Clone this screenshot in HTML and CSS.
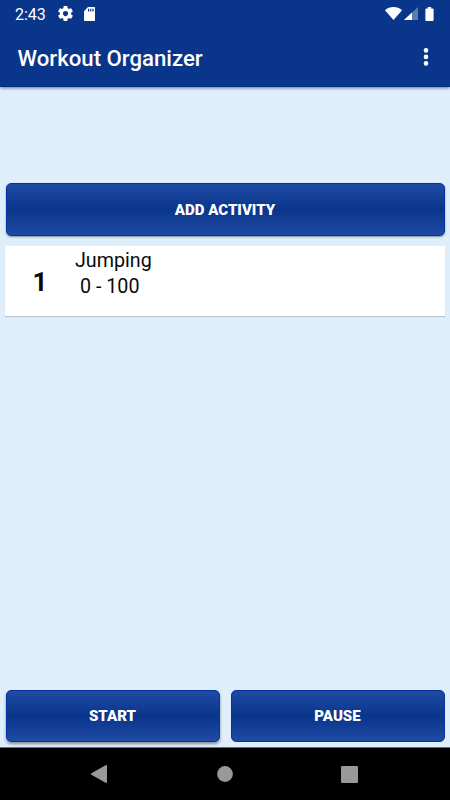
FILE: index.html
```html
<!DOCTYPE html>
<html lang="en">
<head>
  <meta charset="UTF-8">
  <title>Workout Organizer</title>
  <meta name="viewport" content="width=device-width, initial-scale=1">
  <link rel="stylesheet" href="styles.css">
</head>
<body>
<header>
  <div class="status">
    <span class="time">2:43</span>
    <svg class="gear" width="15" height="15" viewBox="2 2 20 20"><path d="M19.43 12.98c.04-.32.07-.64.07-.98s-.03-.66-.07-.98l2.11-1.65c.19-.15.24-.42.12-.64l-2-3.46c-.12-.22-.39-.3-.61-.22l-2.49 1c-.52-.4-1.08-.73-1.69-.98l-.38-2.65A.488.488 0 0 0 14 2h-4c-.25 0-.46.18-.49.42l-.38 2.65c-.61.25-1.17.59-1.69.98l-2.49-1c-.23-.09-.49 0-.61.22l-2 3.46c-.13.22-.07.49.12.64l2.11 1.65c-.04.32-.07.65-.07.98s.03.66.07.98l-2.11 1.65c-.19.15-.24.42-.12.64l2 3.46c.12.22.39.3.61.22l2.49-1c.52.4 1.08.73 1.69.98l.38 2.65c.03.24.24.42.49.42h4c.25 0 .46-.18.49-.42l.38-2.65c.61-.25 1.17-.59 1.69-.98l2.49 1c.23.09.49 0 .61-.22l2-3.46c.12-.22.07-.49-.12-.64l-2.11-1.65zM12 15.5c-1.93 0-3.5-1.57-3.5-3.5s1.57-3.5 3.5-3.5 3.5 1.57 3.5 3.5-1.57 3.5-3.5 3.5z"/></svg>
    <svg class="sdcard" width="11" height="14" viewBox="0 0 11 14"><path fill-rule="evenodd" d="M4 0h6.200q.8 0 .8.800v12.400q0 .8-.8.800H.8q-.8 0-.8-.8V4.200zM4 1.800v2.700h1.200V1.800zM6.200 1.800v2.700h1.200V1.800zM8.400 1.800v2.700h1.200V1.800z"/></svg>
    <svg class="wifi" width="17" height="13" viewBox="0 0 17 13"><path d="M8.500 13 0 3.200C2.300 1 5.200 0 8.500 0s6.200 1 8.500 3.200z"/></svg>
    <svg class="signal" width="14" height="13" viewBox="0 0 14 13"><path opacity=".35" d="M0 13 14 0v13z"/><path d="M0 13 8 5.600V13z"/></svg>
    <svg class="battery" width="9" height="14" viewBox="0 0 9 14"><path d="M2.800 0h3.400v1.400H7.800q.8 0 .8.800v11q0 .8-.8.800H1.200q-.8 0-.8-.8v-11q0-.8.8-.8h1.600z"/></svg>
  </div>
  <div class="toolbar">
    <h1>Workout Organizer</h1>
    <svg width="6" height="18" viewBox="0 0 6 18"><circle cx="3" cy="2.400" r="2.300"/><circle cx="3" cy="8.900" r="2.300"/><circle cx="3" cy="15.400" r="2.300"/></svg>
  </div>
</header>

<main>
  <button class="add">ADD ACTIVITY</button>
  <div class="card">
    <span class="number">1</span>
    <div class="info">
      <div class="name">Jumping</div>
      <div class="range">0 - 100</div>
    </div>
  </div>
  <div class="controls">
    <button class="start">START</button>
    <button class="pause">PAUSE</button>
  </div>
</main>

<nav>
  <svg class="back" width="16" height="18" viewBox="0 0 16 18"><path d="M15 0q1 0 1 1v16q0 1-1 1L.4 9.700q-.8-.7 0-1.400z"/></svg>
  <svg class="home" width="17" height="16" viewBox="0 0 17 16"><circle cx="9" cy="8" r="7.900"/></svg>
  <svg class="recent" width="17" height="17" viewBox="0 0 17 17"><rect width="17" height="17" rx="1.300"/></svg>
</nav>
</body>
</html>
```

FILE: styles.css
```css
* { box-sizing: border-box; }
body { margin: 0; height: 800px; display: flex; flex-direction: column; overflow: hidden; font-family: Roboto, sans-serif; background: #deeefb; }
svg { display: block; flex: none; }

header { height: 87px; background: #09358a; color: white; fill: white; border-bottom: 1px solid #062c88; box-shadow: 0 1px 3px rgba(0, 0, 0, .5); }
.status { display: flex; align-items: center; height: 27px; padding: 0 16px 0 15px; }
.time { width: 43px; font-size: 16px; line-height: 27px; padding-top: 1px; }
.sdcard { margin-left: 11px; }
.wifi { margin-left: auto; }
.signal { margin-left: 2px; }
.battery { margin-left: 7px; }
.toolbar { display: flex; justify-content: space-between; align-items: center; height: 60px; padding: 0 21px 0 17.5px; }
h1 { margin: 0; padding-top: 1px; font-size: 22.2px; font-weight: 500; line-height: 30px; }

main { flex: 1; display: flex; flex-direction: column; padding: 96px 5px 5px; }
button { height: 53px; padding: 0; border: 1px solid #0631a0; border-radius: 5px; background: linear-gradient(#204ba5, #09358a 50%, #204ba5); color: white; font-family: inherit; font-size: 15px; font-weight: 900; box-shadow: 0 1px 2px rgba(0, 0, 0, .4); }
.add { margin: 0 .5px; }
.card { display: flex; height: 70px; margin-top: 10px; background: white; color: #0a0a0a; box-shadow: 0 1px 1px rgba(0, 0, 0, .15); }
.number { width: 70px; text-align: center; font-size: 26px; font-weight: 700; line-height: 73px; }
.info { font-size: 19.7px; line-height: 26px; padding-top: 2px; }
.range { padding-left: 5px; }
.controls { display: flex; gap: 11px; margin-top: auto; padding: 0 .5px; }
.controls button { flex: 1; height: 52px; }
.start { box-shadow: 0 2px 3px rgba(0, 0, 0, .4); }
.pause { box-shadow: none; }

nav { display: flex; align-items: center; height: 53px; padding: 0 92px 0 91px; justify-content: space-between; background: black; fill: #999; border-top: 1px solid #657078; }
```
